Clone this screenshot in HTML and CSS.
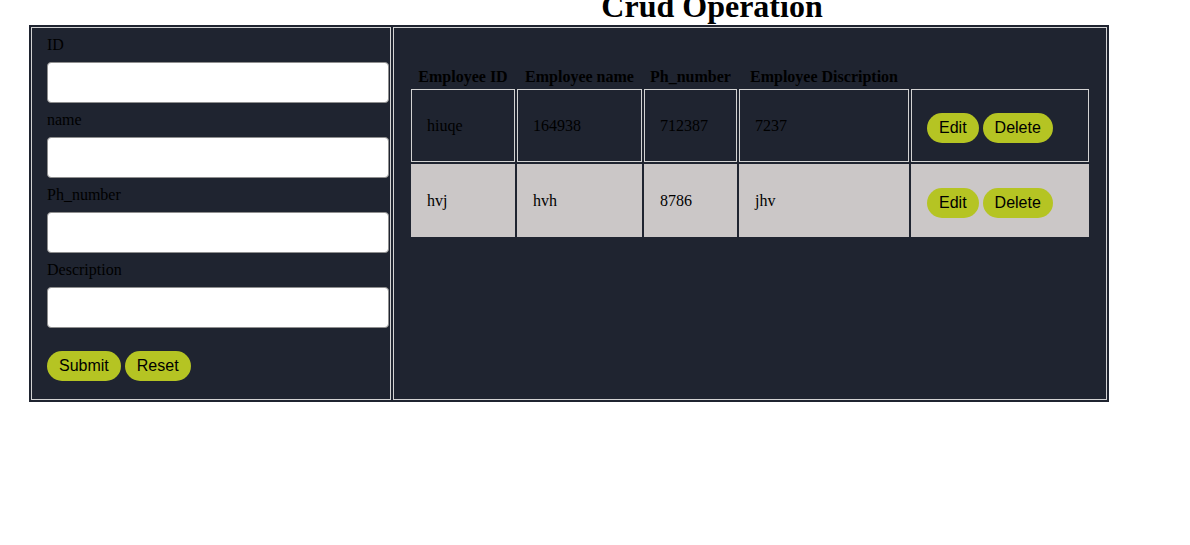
FILE: index.html
```html
<!DOCTYPE html>
<html lang="en">
<head>
<meta charset="utf-8">
<title>Crud Operation</title>
<link rel="stylesheet" href="styles.css">
</head>
<body>
<h1 class="title">Crud Operation</h1>
<table class="layout">
  <tr>
    <td class="form-cell">
      <form class="form">
        <label class="field-label">ID</label>
        <input class="field-input" type="text">
        <label class="field-label">name</label>
        <input class="field-input" type="text">
        <label class="field-label">Ph_number</label>
        <input class="field-input" type="text">
        <label class="field-label">Description</label>
        <input class="field-input" type="text">
        <div class="form-actions">
          <button class="btn" type="button">Submit</button>
          <button class="btn" type="button">Reset</button>
        </div>
      </form>
    </td>
    <td class="list-cell">
      <table class="emp-table">
        <thead>
          <tr>
            <th class="col-id">Employee ID</th>
            <th class="col-name">Employee name</th>
            <th class="col-phone">Ph_number</th>
            <th class="col-desc">Employee Discription</th>
            <th class="col-actions"></th>
          </tr>
        </thead>
        <tbody>
          <tr class="row-dark">
            <td class="cell">hiuqe</td>
            <td class="cell">164938</td>
            <td class="cell">712387</td>
            <td class="cell">7237</td>
            <td class="cell cell-actions"><div class="row-actions"><button class="btn" type="button">Edit</button><button class="btn" type="button">Delete</button></div></td>
          </tr>
          <tr class="row-light">
            <td class="cell">hvj</td>
            <td class="cell">hvh</td>
            <td class="cell">8786</td>
            <td class="cell">jhv</td>
            <td class="cell cell-actions"><div class="row-actions"><button class="btn" type="button">Edit</button><button class="btn" type="button">Delete</button></div></td>
          </tr>
        </tbody>
      </table>
    </td>
  </tr>
</table>
</body>
</html>
```

FILE: styles.css
```css
html, body {
  margin: 0;
  padding: 0;
  background: #ffffff;
}

body {
  font-family: "Liberation Serif", "Times New Roman", serif;
  font-size: 16px;
  color: #000000;
}

.title {
  margin: -12px 0 0 0;
  padding-left: 234px;
  font-size: 32px;
  line-height: 37px;
  font-weight: bold;
  text-align: center;
}

.layout {
  margin-left: 29px;
  width: 1080px;
  table-layout: fixed;
  border-collapse: separate;
  border-spacing: 2px;
  background: #1f2430;
}

.form-cell,
.list-cell {
  box-sizing: border-box;
  border: 1px solid #d3d3d3;
  vertical-align: top;
}

.form-cell {
  width: 360px;
  padding: 8px 15px 18px;
}

.list-cell {
  width: 714px;
  padding: 35px 15px 0;
}

.form {
  display: flex;
  flex-direction: column;
  align-items: flex-start;
  margin: 0;
}

.field-label {
  display: block;
  line-height: 18px;
  margin-bottom: 8px;
}

.field-input {
  box-sizing: border-box;
  width: 342px;
  height: 41px;
  margin: 0 0 8px 0;
  padding: 0 8px;
  border: 1px solid #8f8f8f;
  border-radius: 4px;
  background: #ffffff;
  flex-shrink: 0;
}

.form-actions {
  display: flex;
  gap: 4px;
  margin-top: 15px;
}

.btn {
  font-family: "Liberation Sans", Arial, sans-serif;
  font-size: 16px;
  line-height: 18px;
  height: 30px;
  padding: 6px 12px;
  border: none;
  border-radius: 15px;
  background: #b5c423;
  color: #000000;
  cursor: pointer;
}

.emp-table {
  width: 682px;
  table-layout: fixed;
  border-collapse: separate;
  border-spacing: 2px;
}

.emp-table th {
  box-sizing: border-box;
  padding: 3px 0 1px;
  line-height: 18px;
  font-weight: bold;
  text-align: center;
  white-space: nowrap;
}

.col-id { width: 104px; }
.col-name { width: 125px; }
.col-phone { width: 93px; }
.col-desc { width: 170px; }
.col-actions { width: 178px; }

.cell {
  padding: 27px 15px 26px;
  line-height: 18px;
  border: 1px solid #d3d3d3;
  vertical-align: top;
}

.cell-actions {
  padding: 23px 15px 18px;
}

.row-actions {
  display: flex;
  gap: 4px;
}

.row-light .cell {
  background: #cbc7c7;
  border-color: #cbc7c7;
}
```
